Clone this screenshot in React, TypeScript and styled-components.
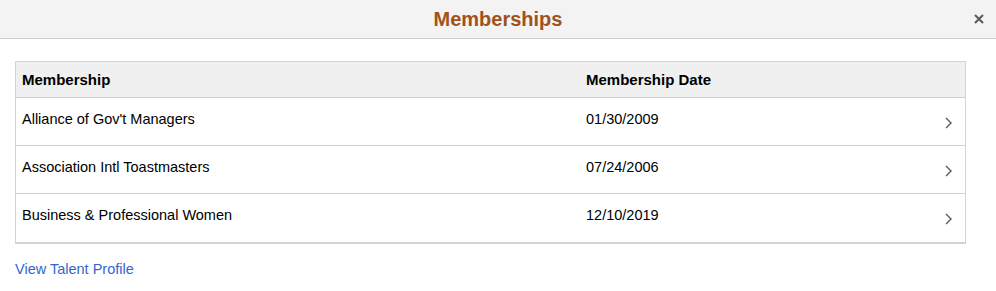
import React from 'react'
import styled, { createGlobalStyle } from 'styled-components'

const GlobalStyle = createGlobalStyle`
  body {
    margin: 0;
    background: #fff;
    font-family: Arial, 'Liberation Sans', sans-serif;
    color: #000;
  }
`

const Header = styled.div`
  height: 38px;
  background: #f3f3f3;
  border-bottom: 1px solid #cfcfcf;
  display: flex;
  align-items: center;
  justify-content: center;
  position: relative;
`

const Title = styled.h1`
  margin: 0;
  font-size: 20px;
  font-weight: bold;
  color: #a0521a;
`

const CloseButton = styled.button`
  position: absolute;
  right: 10px;
  top: 12px;
  width: 14px;
  height: 14px;
  padding: 0;
  border: 0;
  background: none;
  display: flex;
  align-items: center;
  justify-content: center;
  cursor: pointer;
`

const Body = styled.div`
  padding: 22px 30px 0 15px;
`

const Table = styled.div`
  border: 1px solid #d4d4d4;
  border-bottom: 2px solid #d4d4d4;
`

const Row = styled.div<{ $head?: boolean }>`
  display: grid;
  grid-template-columns: 564px 1fr 32px;
  align-items: ${p => (p.$head ? 'center' : 'start')};
  height: ${p => (p.$head ? '35px' : '47px')};
  padding-left: 6px;
  background: ${p => (p.$head ? '#f0f0f0' : '#fff')};
  border-bottom: 1px solid #d0d0d0;
  font-size: ${p => (p.$head ? '15px' : '14.5px')};
  font-weight: ${p => (p.$head ? 'bold' : 'normal')};
  color: #000;

  &:last-child {
    border-bottom: 0;
    height: 48px;
  }
`

const Cell = styled.div<{ $head?: boolean }>`
  padding-top: ${p => (p.$head ? '0' : '13px')};
`

const Chevron = styled.div`
  padding-top: 19px;
  padding-left: 12px;
  display: flex;
`

const Link = styled.a`
  display: inline-block;
  margin-top: 17px;
  font-size: 14.5px;
  color: #3366cc;
  text-decoration: none;
  cursor: pointer;
`

const memberships = [
  { name: "Alliance of Gov't Managers", date: '01/30/2009' },
  { name: 'Association Intl Toastmasters', date: '07/24/2006' },
  { name: 'Business & Professional Women', date: '12/10/2019' },
]

const App: React.FC = () => {
  return (
    <>
      <GlobalStyle />
      <Header>
        <Title>Memberships</Title>
        <CloseButton aria-label="Close">
          <svg width="10" height="10" viewBox="0 0 10 10">
            <path d="M1 1 L9 9 M9 1 L1 9" stroke="#555a60" strokeWidth="2" />
          </svg>
        </CloseButton>
      </Header>

      <Body>
        <Table>
          <Row $head>
            <Cell $head>Membership</Cell>
            <Cell $head>Membership Date</Cell>
            <div />
          </Row>
          {memberships.map(m => (
            <Row key={m.name}>
              <Cell>{m.name}</Cell>
              <Cell>{m.date}</Cell>
              <Chevron>
                <svg width="7" height="12" viewBox="0 0 7 12">
                  <path d="M1 1 L6 6 L1 11" fill="none" stroke="#555a60" strokeWidth="1.4" />
                </svg>
              </Chevron>
            </Row>
          ))}
        </Table>
        <Link>View Talent Profile</Link>
      </Body>
    </>
  )
}

export default App
